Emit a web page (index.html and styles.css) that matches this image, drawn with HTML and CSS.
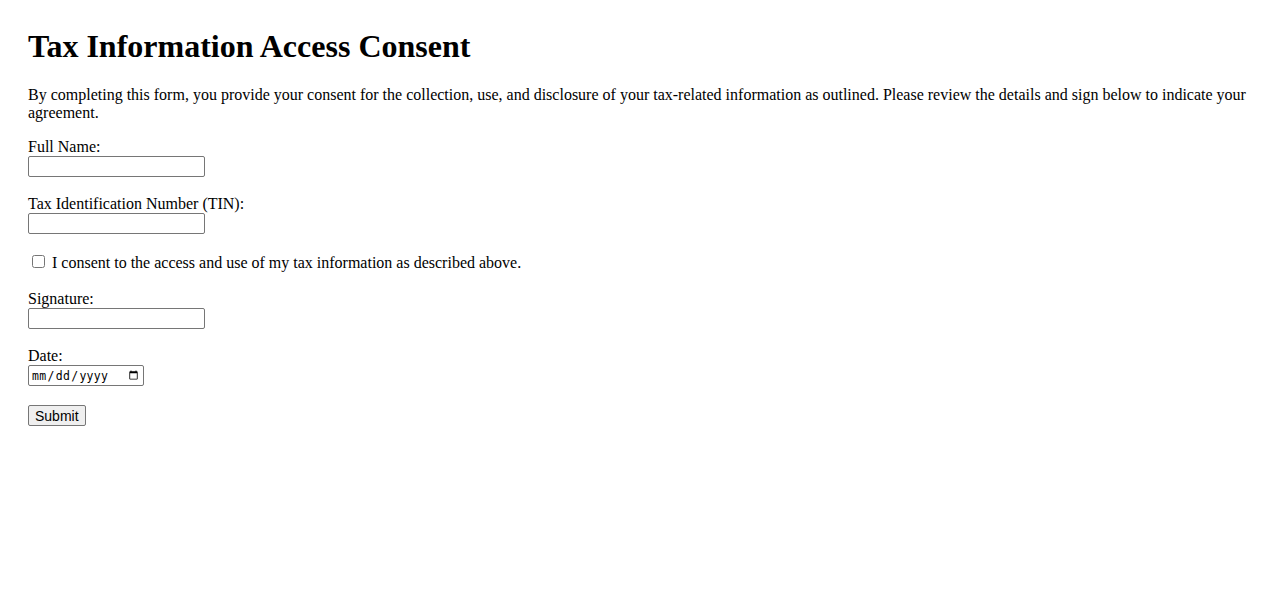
FILE: index.html
```
<!DOCTYPE html>
<html lang="en">
<head>
    <meta charset="UTF-8">
    <meta name="viewport" content="width=device-width, initial-scale=1.0">
    <title>Tax Information Access Consent</title>
    <link rel="stylesheet" href="styles.css">
</head>
<body>
    <div class="page">
        <h1 class="title">Tax Information Access Consent</h1>
        <p class="intro">By completing this form, you provide your consent for the collection, use, and disclosure of your tax-related information as outlined. Please review the details and sign below to indicate your agreement.</p>

        <form class="consent-form" id="consentForm">
            <label for="fullName">Full Name:</label><br>
            <input class="text-field" type="text" id="fullName" name="fullName" required><br><br>

            <label for="tin">Tax Identification Number (TIN):</label><br>
            <input class="text-field" type="text" id="tin" name="tin" required><br><br>

            <input class="check" type="checkbox" id="consent" name="consent" required>
            <label for="consent">I consent to the access and use of my tax information as described above.</label><br><br>

            <label for="signature">Signature:</label><br>
            <input class="text-field" type="text" id="signature" name="signature" required><br><br>

            <label for="date">Date:</label><br>
            <input class="date-field" type="date" id="date" name="date" required><br><br>

            <button class="submit-btn" type="submit">Submit</button>
        </form>
    </div>
</body>
</html>
```

FILE: styles.css
```
/* Page */
body {
    margin: 8px;
    font-family: "Liberation Serif", "Times New Roman", serif;
    font-size: 16px;
    color: #000;
    background: #fff;
}

.page {
    padding: 20px;
}

.title {
    font-size: 32px;
    font-weight: bold;
    margin: 0 0 21px;
}

.intro {
    margin: 0 0 16px;
}

/* Form controls */
.text-field {
    box-sizing: border-box;
    width: 177px;
    height: 21px;
    padding: 1px 2px;
    border: 1px solid #767676;
    border-radius: 2px;
    font-family: "Liberation Sans", Arial, sans-serif;
    font-size: 13.33px;
}

.check {
    width: 13px;
    height: 13px;
    margin: 3px 3px 3px 4px;
}

.date-field {
    box-sizing: border-box;
    width: 116px;
    height: 21px;
    padding: 1px 2px;
    border: 1px solid #767676;
    border-radius: 2px;
    font-family: "DejaVu Sans Mono", monospace;
    font-size: 11.5px;
    letter-spacing: 0.3px;
}

.submit-btn {
    box-sizing: border-box;
    height: 21px;
    margin-top: 1px;
    padding: 1px 6px;
    border: 1px solid #767676;
    border-radius: 2px;
    background: #efefef;
    font-family: "Liberation Sans", Arial, sans-serif;
    font-size: 14px;
    color: #000;
}
```
